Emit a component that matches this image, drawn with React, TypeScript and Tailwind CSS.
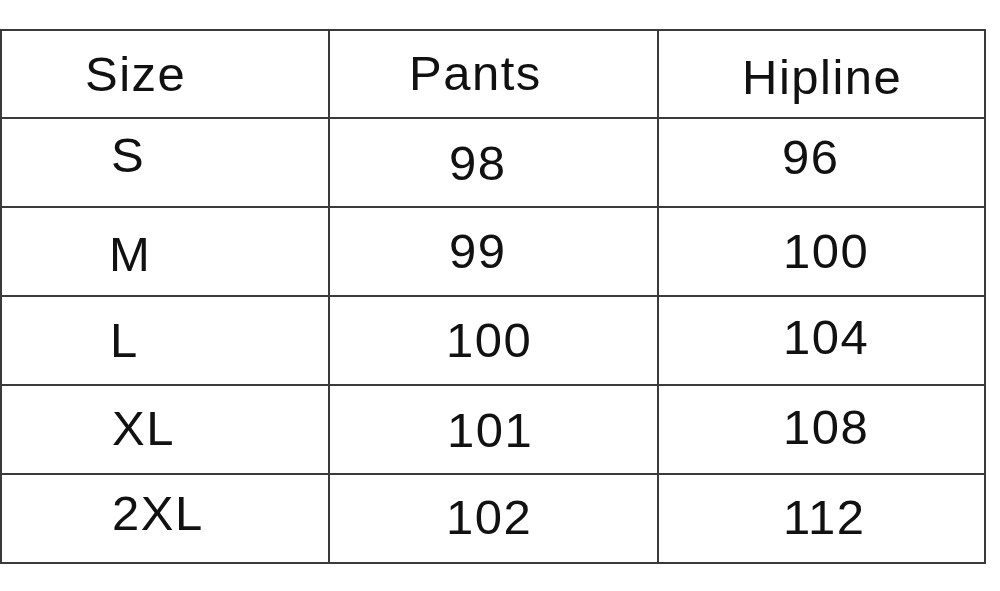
const font = { fontFamily: '"Liberation Sans", Arial, sans-serif' };

// each cell keeps its own offset, the source chart is hand-placed
const rows = [
  [
    { text: 'Size', pad: 'pl-[83px] pt-[19px]' },
    { text: 'Pants', pad: 'pl-[79px] pt-[18px]' },
    { text: 'Hipline', pad: 'pl-[83px] pt-[22px]' },
  ],
  [
    { text: 'S', pad: 'pl-[109px] pt-[12px]' },
    { text: '98', pad: 'pl-[119px] pt-[20px]' },
    { text: '96', pad: 'pl-[123px] pt-[14px]' },
  ],
  [
    { text: 'M', pad: 'pl-[107px] pt-[22px]' },
    { text: '99', pad: 'pl-[119px] pt-[19px]' },
    { text: '100', pad: 'pl-[124px] pt-[19px]' },
  ],
  [
    { text: 'L', pad: 'pl-[108px] pt-[19px]' },
    { text: '100', pad: 'pl-[116px] pt-[19px]' },
    { text: '104', pad: 'pl-[124px] pt-[16px]' },
  ],
  [
    { text: 'XL', pad: 'pl-[110px] pt-[18px]' },
    { text: '101', pad: 'pl-[117px] pt-[20px]' },
    { text: '108', pad: 'pl-[124px] pt-[17px]' },
  ],
  [
    { text: '2XL', pad: 'pl-[110px] pt-[14px]' },
    { text: '102', pad: 'pl-[116px] pt-[18px]' },
    { text: '112', pad: 'pl-[124px] pt-[18px]' },
  ],
];

export default function App() {
  return (
    <div className="w-[1000px] h-[591px] bg-white pt-[29px] overflow-hidden" style={font}>
      <div className="w-[986px] p-[2px] bg-[#3a3a3a] grid grid-cols-[326px_327px_325px] grid-rows-[86px_87px_87px_87px_87px_87px] gap-[2px]">
        {rows.flatMap((row, i) =>
          row.map((cell, j) => (
            <div key={`${i}-${j}`} className={`bg-white ${cell.pad}`}>
              <span className="block text-[49px] leading-[49px] tracking-[1.5px] text-[#111]">
                {cell.text}
              </span>
            </div>
          ))
        )}
      </div>
    </div>
  );
}
